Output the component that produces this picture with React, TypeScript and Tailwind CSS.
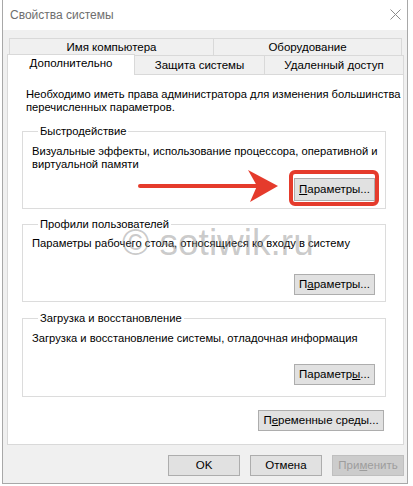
import React from "react";

// System Properties dialog (Windows 10), "Advanced" tab, with a red annotation
const font = "font-['Liberation_Sans',Arial,sans-serif]";

function Btn({
  children,
  className = "",
  disabled = false,
}: {
  children: React.ReactNode;
  className?: string;
  disabled?: boolean;
}) {
  return (
    <button
      type="button"
      className={
        "flex items-center justify-center border text-[11.5px] leading-none " +
        (disabled
          ? "border-[#bfbfbf] bg-[#cccccc] text-[#9d9d9d] "
          : "border-[#adadad] bg-[#e1e1e1] text-black ") +
        className
      }
    >
      {children}
    </button>
  );
}

function Group({
  title,
  className = "",
  children,
}: {
  title: string;
  className?: string;
  children: React.ReactNode;
}) {
  return (
    <fieldset className={"w-[364px] min-w-0 border border-[#dcdcdc] pl-[9px] pr-[10px] " + className}>
      <legend className="ml-[6px] px-[2px] leading-[13px]">{title}</legend>
      {children}
    </fieldset>
  );
}

export default function App() {
  return (
    <div className={`relative h-[486px] w-[413px] overflow-hidden bg-white text-[11.2px] text-black ${font}`}>
      <div className="ml-[2px] flex h-[484px] w-[406px] flex-col border border-t-0 border-[#a8a8a8] bg-[#f0f0f0]">
        {/* Title bar */}
        <div className="flex h-[30px] shrink-0 items-center justify-between bg-white pl-[7px] pr-[6px]">
          <span className="text-[12px] text-[#6e6e6e]">Свойства системы</span>
          <svg width="11" height="11" viewBox="0 0 11 11" className="mb-[2px]">
            <path d="M0.5 0.5 L10.5 10.5 M10.5 0.5 L0.5 10.5" stroke="#8c8c8c" strokeWidth="1" fill="none" />
          </svg>
        </div>

        {/* Tabs */}
        <div className="pt-[8px] text-[11.5px]">
          <div className="ml-[6px] flex h-[17px]">
            <div className="flex w-[205px] items-center justify-center border border-b-0 border-[#d9d9d9] pt-[2px]">
              Имя компьютера
            </div>
            <div className="-ml-px flex w-[189px] items-center justify-center border border-b-0 border-[#d9d9d9] pt-[2px]">
              Оборудование
            </div>
          </div>
          <div className="ml-[4px] flex h-[19px] items-end">
            <div className="relative z-10 flex h-[21px] w-[128px] translate-y-px items-center justify-center border border-b-0 border-[#d9d9d9] bg-white pb-[2px]">
              Дополнительно
            </div>
            <div className="flex h-[19px] w-[130px] items-center justify-center border border-b-0 border-l-0 border-[#d9d9d9] pt-[2px]">
              Защита системы
            </div>
            <div className="flex h-[19px] w-[139px] items-center justify-center border border-b-0 border-l-0 border-[#d9d9d9] pt-[2px]">
              Удаленный доступ
            </div>
          </div>
        </div>

        {/* Panel */}
        <div className="relative ml-[4px] h-[371px] w-[397px] shrink-0 border border-[#d9d9d9] bg-white px-[14px] pt-[13px]">
          <p className="ml-[4px] whitespace-nowrap leading-[13px]">
            Необходимо иметь права администратора для изменения большинства
            <br />
            перечисленных параметров.
          </p>

          <Group title="Быстродействие" className="mt-[11px] pb-[7px]">
            <p className="mt-[7px] whitespace-nowrap leading-[13px]">
              Визуальные эффекты, использование процессора, оперативной и
              <br />
              виртуальной памяти
            </p>
            <div className="mt-[7px] flex justify-end">
              <div className="relative">
                <Btn className="h-[23px] w-[81px]">
                  <span>
                    <u>П</u>араметры...
                  </span>
                </Btn>
                <div className="absolute -bottom-[5px] -left-[5px] -right-[4px] -top-[8px] rounded-[6px] border-[4px] border-[#e53b2c]" />
              </div>
            </div>
          </Group>

          <Group title="Профили пользователей" className="mt-[9px] pb-[6px]">
            <p className="mt-[6px] whitespace-nowrap leading-[13px]">
              Параметры рабочего стола, относящиеся ко входу в систему
            </p>
            <div className="mt-[24px] flex justify-end">
              <Btn className="h-[21px] w-[81px]">
                <span>
                  П<u>а</u>раметры...
                </span>
              </Btn>
            </div>
          </Group>

          <Group title="Загрузка и восстановление" className="mt-[10px] pb-[11px]">
            <p className="mt-[7px] whitespace-nowrap leading-[13px]">
              Загрузка и восстановление системы, отладочная информация
            </p>
            <div className="mt-[19px] flex justify-end">
              <Btn className="h-[21px] w-[81px]">
                <span>
                  Параметр<u>ы</u>...
                </span>
              </Btn>
            </div>
          </Group>

          <div className="mt-[13px] flex w-[362px] justify-end">
            <Btn className="h-[21px] w-[126px]">
              <span>
                П<u>е</u>ременные среды...
              </span>
            </Btn>
          </div>

          {/* red arrow annotation */}
          <svg
            width="146"
            height="36"
            viewBox="0 0 146 36"
            className="absolute left-[130px] top-[93px]"
          >
            <path d="M2 18 H122" stroke="#e53b2c" strokeWidth="4" strokeLinecap="round" />
            <path d="M140 18 L110 2 L119 18 L112 34 Z" fill="#e53b2c" />
          </svg>

          {/* watermark */}
          <div className="pointer-events-none absolute left-[114px] top-[149px] text-[37px] leading-none text-[#8a8a8a]/45">
            © sotiwik.ru
          </div>
        </div>

        {/* Dialog buttons */}
        <div className="mt-[10px] flex justify-end gap-[10px] pr-[3px]">
          <Btn className="h-[21px] w-[72px]">OK</Btn>
          <Btn className="h-[21px] w-[72px]">Отмена</Btn>
          <Btn className="h-[21px] w-[72px]" disabled>
            <span>
              При<u>м</u>енить
            </span>
          </Btn>
        </div>
      </div>
    </div>
  );
}
